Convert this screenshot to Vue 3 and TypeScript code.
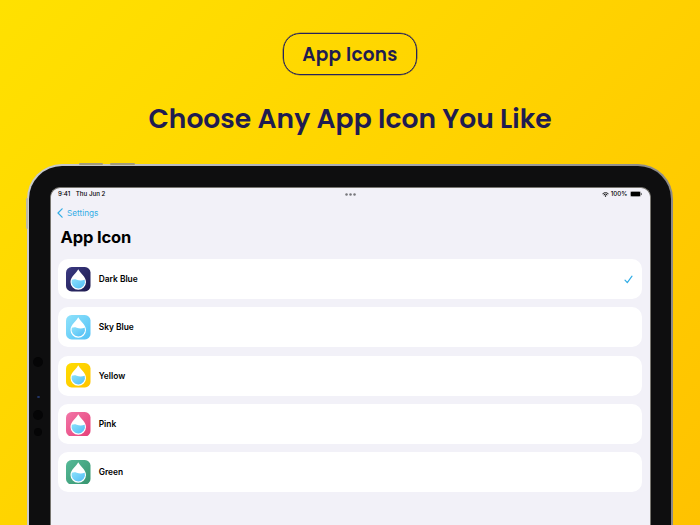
<template>
  <div class="poster">
    <div class="badge"><span class="badge-text">App Icons</span></div>
    <h1 class="headline">Choose Any App Icon You Like</h1>

    <div class="device">
      <i class="key key-top-a"></i>
      <i class="key key-top-b"></i>
      <i class="key key-side"></i>
      <div class="bezel">
        <i class="sensor sensor-a"></i>
        <i class="sensor sensor-led"></i>
        <i class="sensor sensor-b"></i>
        <i class="sensor sensor-c"></i>

        <div class="screen">
          <div class="status-bar">
            <div class="status-left">
              <span class="time">9:41</span>
              <span class="date">Thu Jun 2</span>
            </div>
            <svg class="dots" viewBox="0 0 11 3">
              <circle cx="1.500" cy="1.500" r="1.250" />
              <circle cx="5.500" cy="1.500" r="1.250" />
              <circle cx="9.500" cy="1.500" r="1.250" />
            </svg>
            <div class="status-right">
              <svg class="wifi" viewBox="0 0 14 10">
                <path d="M1 3.600a8.600 8.600 0 0 1 12 0M3.200 5.900a5.500 5.500 0 0 1 7.600 0" />
                <path class="wifi-dot" d="M7 9.800 4.900 7.700a3 3 0 0 1 4.200 0z" />
              </svg>
              <span class="percent">100%</span>
              <svg class="battery" viewBox="0 0 25 12">
                <rect class="battery-case" x=".5" y=".5" width="21" height="11" rx="3" />
                <rect x="1.500" y="1.500" width="19" height="9" rx="2" />
                <path d="M23 4v4c.9-.4 1.500-1.100 1.500-2S23.900 4.400 23 4z" />
              </svg>
            </div>
          </div>

          <div class="nav">
            <svg class="back" viewBox="0 0 6 10"><path d="M5.100.8 1 5l4.100 4.200" /></svg>
            <span class="back-label">Settings</span>
          </div>
          <h2 class="page-title">App Icon</h2>

          <ul class="list">
            <li v-for="icon in icons" :key="icon.id" class="row" @click="selected = icon.id">
              <svg class="app-icon" viewBox="0 0 48 48">
                <defs>
                  <linearGradient :id="`tile-${icon.id}`" x1="0" y1="0" x2="1" y2="1">
                    <stop offset="0" :stop-color="icon.from" />
                    <stop offset="1" :stop-color="icon.to" />
                  </linearGradient>
                  <linearGradient :id="`water-${icon.id}`" x1="0" y1="0" x2="1" y2="1">
                    <stop offset="0" stop-color="#8be0fb" />
                    <stop offset="1" stop-color="#50bdf5" />
                  </linearGradient>
                </defs>
                <rect width="48" height="48" rx="11" :fill="`url(#tile-${icon.id})`" />
                <path class="drop" d="M24 4.500C21 11 8.800 19.500 8.800 29.300a15.200 15.200 0 0 0 30.400 0C39.200 19.500 27 11 24 4.500z" />
                <path
                  d="M11.300 25.200c3.200-1.600 6.500-1.500 9.700-.3 4.800 1.800 10.200 1.700 15.700.2a13.200 13.200 0 1 1-25.400.1z"
                  :fill="`url(#water-${icon.id})`"
                />
              </svg>
              <span class="name">{{ icon.name }}</span>
              <svg v-if="selected === icon.id" class="check" viewBox="0 0 9 9">
                <path d="M1 5.100 3.300 7.700 8 1.200" />
              </svg>
            </li>
          </ul>
        </div>
      </div>
    </div>
  </div>
</template>

<script setup lang="ts">
import { ref } from 'vue';

interface AppIcon {
  id: string;
  name: string;
  from: string;
  to: string;
}

const icons: AppIcon[] = [
  { id: 'dark-blue', name: 'Dark Blue', from: '#3b3a83', to: '#1d1a4d' },
  { id: 'sky-blue', name: 'Sky Blue', from: '#8fe2fb', to: '#53c2f6' },
  { id: 'yellow', name: 'Yellow', from: '#ffdc00', to: '#ffc400' },
  { id: 'pink', name: 'Pink', from: '#f277a8', to: '#e63f78' },
  { id: 'green', name: 'Green', from: '#56ba98', to: '#37946f' },
];

const selected = ref('dark-blue');
</script>

<style>
body {
  margin: 0;
}
</style>

<style scoped>
.poster {
  width: 700px;
  height: 525px;
  box-sizing: border-box;
  padding-top: 33px;
  overflow: hidden;
  display: flex;
  flex-direction: column;
  align-items: center;
  background: linear-gradient(135deg, #ffe100 0%, #ffd200 50%, #ffc200 100%);
  color: #1f1c50;
  font-family: Poppins, Inter, "Noto Sans", sans-serif;
}

.badge {
  box-sizing: border-box;
  flex: none;
  width: 134px;
  height: 42px;
  display: flex;
  align-items: center;
  justify-content: center;
  border: 1.500px solid #26235a;
  border-radius: 17px;
  box-shadow: 0 0 0 0.300px #26235a;
}

.badge-text {
  font-size: 18.500px;
  font-weight: 600;
  letter-spacing: 0.250px;
  white-space: nowrap;
}

.headline {
  flex: none;
  margin: 24px 0 0;
  height: 40px;
  line-height: 40px;
  font-size: 26.600px;
  font-weight: 600;
  white-space: nowrap;
}

.device {
  position: relative;
  box-sizing: border-box;
  flex: none;
  width: 646px;
  height: 460px;
  margin-top: 25px;
  padding: 2px 2px 0 2px;
  border-radius: 35px 35px 0 0;
  background: linear-gradient(90deg, #c9cbcc, #a9acb5 50%, #8d8a86);
}

.key {
  position: absolute;
  background: #a39c7c;
  border-radius: 1px;
}

.key-top-a {
  left: 52px;
  top: -1px;
  width: 24px;
  height: 2px;
}

.key-top-b {
  left: 83px;
  top: -1px;
  width: 25px;
  height: 2px;
}

.key-side {
  left: -1px;
  top: 34px;
  width: 2px;
  height: 31px;
  background: #bdbaa5;
}

.bezel {
  position: relative;
  box-sizing: border-box;
  height: 100%;
  padding: 21px 20px 0 21px;
  border-radius: 33px 33px 0 0;
  background: #0e0e0f;
}

.sensor {
  position: absolute;
  border-radius: 50%;
  background: #050506;
}

.sensor-a {
  left: 4px;
  top: 191px;
  width: 10px;
  height: 10px;
}

.sensor-led {
  left: 8px;
  top: 230px;
  width: 3px;
  height: 2px;
  background: #24386b;
}

.sensor-b {
  left: 4px;
  top: 244px;
  width: 10px;
  height: 10px;
}

.sensor-c {
  left: 5px;
  top: 262px;
  width: 8px;
  height: 8px;
}

.screen {
  box-sizing: border-box;
  height: 100%;
  border: 1px solid #77756f;
  border-bottom: 0;
  border-radius: 10px 10px 0 0;
  background: #f2f1f8;
  color: #000;
  font-family: Inter, "Noto Sans", sans-serif;
}

.status-bar {
  height: 12px;
  padding: 0 8px 0 7px;
  display: grid;
  grid-template-columns: 1fr auto 1fr;
  align-items: center;
  font-size: 6.200px;
  line-height: 8px;
  font-weight: 500;
}

.status-left,
.status-right {
  display: flex;
  align-items: center;
}

.status-left {
  gap: 5.500px;
}

.status-right {
  justify-content: flex-end;
  gap: 2px;
}

.dots {
  width: 11px;
  height: 3px;
  fill: #77777b;
}

.wifi {
  width: 7px;
  height: 5px;
  fill: none;
  stroke: #000;
  stroke-width: 1.700;
}

.wifi-dot {
  fill: #000;
  stroke: none;
}

.battery {
  width: 12.500px;
  height: 6px;
}

.battery-case {
  fill: none;
  stroke: #8e8e93;
}

.nav {
  height: 25px;
  padding-left: 6px;
  display: flex;
  align-items: center;
  gap: 4px;
  color: #32ade6;
  font-size: 8.200px;
}

.back,
.check {
  fill: none;
  stroke: #32ade6;
  stroke-linecap: round;
  stroke-linejoin: round;
}

.back {
  width: 6px;
  height: 10px;
  stroke-width: 1.200;
}

.page-title {
  margin: 0;
  padding-left: 9.500px;
  height: 24px;
  line-height: 24px;
  font-size: 16.500px;
  font-weight: 700;
  letter-spacing: -0.150px;
}

.list {
  margin: 10.300px 0 0;
  padding: 0 8.500px 0 7.400px;
  list-style: none;
  display: flex;
  flex-direction: column;
  gap: 8.200px;
}

.row {
  box-sizing: border-box;
  height: 40px;
  padding: 0 8.500px 0 8px;
  display: flex;
  align-items: center;
  border-radius: 10px;
  background: #fff;
  cursor: pointer;
}

.app-icon {
  flex: none;
  width: 24.500px;
  height: 24.500px;
}

.drop {
  fill: #fff;
}

.name {
  flex: 1;
  margin-left: 7.800px;
  font-size: 8.400px;
  font-weight: 600;
}

.check {
  width: 9px;
  height: 9px;
  stroke-width: 1.200;
}
</style>
